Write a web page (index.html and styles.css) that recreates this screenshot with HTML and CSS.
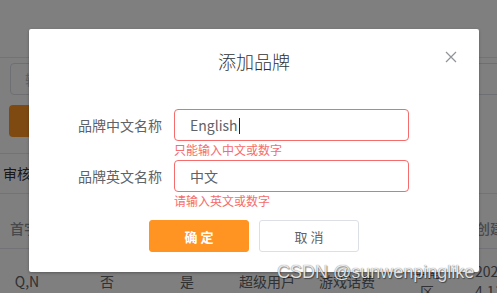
FILE: index.html
```html
<!DOCTYPE html>
<html lang="zh-CN">
<head>
    <meta charset="UTF-8">
    <meta name="viewport" content="width=device-width, initial-scale=1.0">
    <title>添加品牌</title>
    <link rel="stylesheet" href="styles.css">
</head>
<body>
    <div class="page">
        <div class="topbar"></div>

        <div class="search-row">
            <div class="search-input">输入品牌名称</div>
            <div class="search-input search-wide"></div>
        </div>

        <div class="toolbar">
            <div class="btn-add">新增</div>
        </div>

        <div class="tabs">
            <div class="tab-item">审核</div>
        </div>

        <div class="table-head">
            <div class="cell head-cell">首字母</div>
            <div class="cell"></div>
            <div class="cell"></div>
            <div class="cell"></div>
            <div class="cell"></div>
            <div class="cell"></div>
            <div class="cell head-cell head-right">创建时间</div>
        </div>

        <div class="table-row">
            <div class="cell">Q,N</div>
            <div class="cell">否</div>
            <div class="cell">是</div>
            <div class="cell">超级用户</div>
            <div class="cell">游戏话费</div>
            <div class="cell">华南<br>区</div>
            <div class="cell cell-date">2023-0<br>4.11</div>
        </div>
    </div>

    <div class="mask"></div>

    <div class="dialog">
        <div class="dialog-header">
            <span class="dialog-title">添加品牌</span>
            <svg class="dialog-close" width="12" height="12" viewBox="0 0 12 12">
                <path d="M1 1 L11 11 M11 1 L1 11" stroke="#909399" stroke-width="1.2" fill="none"/>
            </svg>
        </div>

        <div class="dialog-body">
            <div class="form-item">
                <label class="form-label">品牌中文名称</label>
                <div class="form-control">
                    <div class="input is-error">English<span class="caret"></span></div>
                    <div class="form-error">只能输入中文或数字</div>
                </div>
            </div>
            <div class="form-item">
                <label class="form-label">品牌英文名称</label>
                <div class="form-control">
                    <div class="input is-error">中文</div>
                    <div class="form-error">请输入英文或数字</div>
                </div>
            </div>
        </div>

        <div class="dialog-footer">
            <button class="btn btn-primary">确 定</button>
            <button class="btn btn-default">取 消</button>
        </div>
    </div>

    <div class="watermark">CSDN @sunwenpinglike</div>
</body>
</html>
```

FILE: styles.css
```css
:root {
    --orange: #ff9423;
    --danger: #f56c6c;
    --text: #303133;
    --regular: #606266;
    --muted: #909399;
    --line: #e4e7ed;
}

* {
    margin: 0;
    padding: 0;
    box-sizing: border-box;
}

body {
    font-family: "Noto Sans CJK SC", "Noto Sans", sans-serif;
    background-color: #fff;
    color: var(--text);
    width: 497px;
    height: 293px;
    overflow: hidden;
    position: relative;
}

/* page behind the dialog */

.page {
    width: 497px;
}

.topbar {
    height: 58px;
    border-bottom: 1px solid var(--line);
}

.search-row {
    display: flex;
    gap: 80px;
    padding: 5px 0 0 10px;
    width: 600px;
}

.search-input {
    width: 200px;
    height: 32px;
    border: 1px solid #dcdfe6;
    border-radius: 4px;
    padding: 0 14px;
    font-size: 14px;
    line-height: 30px;
    color: #c0c4cc;
    white-space: nowrap;
    overflow: hidden;
}

.search-wide {
    width: 240px;
}

.toolbar {
    padding: 10px 0 0 9px;
}

.btn-add {
    width: 80px;
    height: 32px;
    background-color: var(--orange);
    border-radius: 4px;
    padding-left: 26px;
    font-size: 13px;
    line-height: 32px;
    color: #fff;
}

.tabs {
    margin-top: 16px;
    height: 41px;
    border-bottom: 1px solid var(--line);
}

.tab-item {
    width: 200px;
    height: 40px;
    border-top: 1px solid var(--line);
    font-size: 14px;
    line-height: 39px;
    padding-left: 3px;
    color: #333;
}

.table-head,
.table-row {
    display: flex;
    margin-left: -13px;
    width: 580px;
}

.table-head {
    height: 55px;
    border-bottom: 1px solid var(--line);
    align-items: flex-end;
    padding-bottom: 10px;
}

.cell {
    width: 80px;
    flex-shrink: 0;
    font-size: 14px;
    line-height: 20px;
    text-align: center;
    color: var(--regular);
    white-space: nowrap;
    overflow: hidden;
}

.head-cell {
    color: var(--muted);
    font-weight: 500;
    text-align: left;
    padding-left: 23px;
}

.head-right {
    padding-left: 9px;
}

.table-row {
    padding-top: 12px;
    align-items: center;
}

.cell-date {
    text-align: left;
    padding-left: 8px;
}

/* overlay and dialog */

.mask {
    position: absolute;
    inset: 0;
    background-color: rgba(0, 0, 0, 0.5);
}

.dialog {
    position: absolute;
    left: 29px;
    top: 29px;
    width: 450px;
    height: 243px;
    background-color: #fff;
    border-radius: 2px;
    box-shadow: 0 1px 3px rgba(0, 0, 0, 0.3);
}

.dialog-header {
    position: relative;
    padding-top: 20px;
    height: 44px;
    text-align: center;
}

.dialog-title {
    font-size: 18px;
    line-height: 24px;
    font-weight: 300;
    color: var(--text);
}

.dialog-close {
    position: absolute;
    top: 22px;
    right: 22px;
}

.dialog-body {
    padding-top: 36px;
}

.form-item {
    display: flex;
}

.form-label {
    width: 145px;
    padding-right: 12px;
    text-align: right;
    font-size: 14px;
    line-height: 32px;
    color: var(--regular);
}

.input {
    width: 235px;
    height: 32px;
    border: 1px solid #dcdfe6;
    border-radius: 4px;
    padding: 0 15px;
    font-size: 14px;
    line-height: 30px;
    color: var(--regular);
}

.input.is-error {
    border-color: var(--danger);
}

.caret {
    display: inline-block;
    width: 1px;
    height: 16px;
    background-color: #222;
    vertical-align: -3px;
    margin-left: 1px;
}

.form-error {
    height: 19px;
    font-size: 12px;
    line-height: 17px;
    color: var(--danger);
}

.dialog-footer {
    display: flex;
    justify-content: center;
    gap: 10px;
    padding-top: 9px;
}

.btn {
    width: 100px;
    height: 32px;
    border-radius: 3px;
    font-family: inherit;
    font-size: 13px;
    cursor: pointer;
}

.btn-primary {
    background-color: var(--orange);
    border: 1px solid var(--orange);
    color: #fff;
    font-weight: 700;
}

.btn-default {
    background-color: #fff;
    border: 1px solid #dcdfe6;
    color: var(--regular);
}

.watermark {
    position: absolute;
    left: 277px;
    top: 261px;
    font-family: "Liberation Sans", Arial, sans-serif;
    font-size: 18px;
    line-height: 22px;
    color: rgba(255, 255, 255, 0.85);
    text-shadow: 0 0 1px rgba(0, 0, 0, 0.6), 1px 1px 1px rgba(0, 0, 0, 0.4);
    white-space: nowrap;
}
```
